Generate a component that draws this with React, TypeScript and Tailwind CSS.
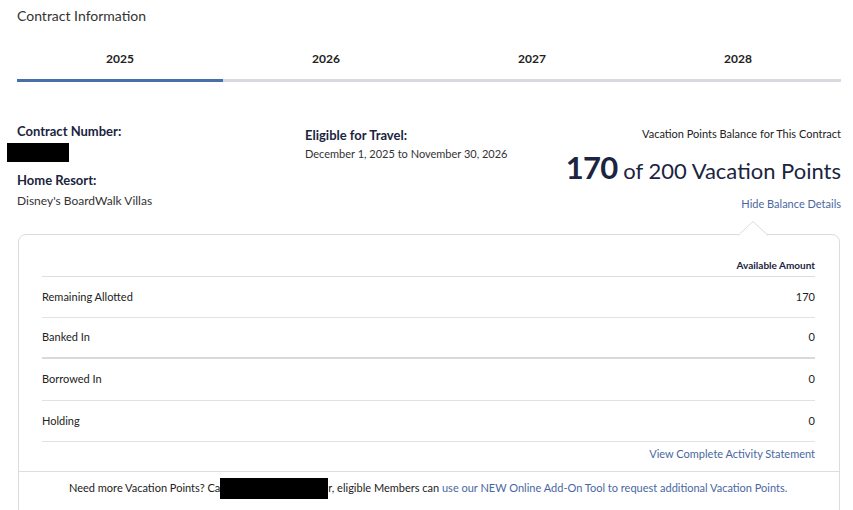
import { memo } from "react";

const years = ["2025", "2026", "2027", "2028"];

const rows = [
  { label: "Remaining Allotted", value: "170" },
  { label: "Banked In", value: "0" },
  { label: "Borrowed In", value: "0" },
  { label: "Holding", value: "0" },
];

function App() {
  return (
    <div className="min-h-screen bg-white text-[#253047] font-['Lato',_'Noto_Sans',_sans-serif] pl-[17px] pr-[12px] pt-[5px]">
      <div className="text-[14px] text-[#333]">Contract Information</div>

      {/* year tabs */}
      <div className="mt-[24px] flex">
        {years.map((y, i) => (
          <div key={y} className="flex-1 flex flex-col items-center">
            <div className="h-[29px] text-[12px] font-bold text-[#222]">{y}</div>
            <div className={i === 0 ? "w-full h-[3px] bg-[#4a6fa8]" : "w-full h-[3px] bg-[#d6dae0]"}></div>
          </div>
        ))}
      </div>

      {/* contract summary */}
      <div className="mt-[41px] flex">
        <div className="w-[288px]">
          <div className="text-[13px] font-bold text-[#1b2440] leading-[17px]">Contract Number:</div>
          <div className="-ml-[10px] mt-[3px] w-[62px] h-[19px] bg-black"></div>
          <div className="mt-[10px] text-[13px] font-bold text-[#1b2440] leading-[17px]">Home Resort:</div>
          <div className="mt-[3px] text-[12px] text-[#333]">Disney's BoardWalk Villas</div>
        </div>
        <div className="pt-[4px]">
          <div className="text-[13px] font-bold text-[#1b2440] leading-[17px]">Eligible for Travel:</div>
          <div className="mt-[2px] text-[11px] text-[#333]">December 1, 2025 to November 30, 2026</div>
        </div>
        <div className="flex-1 flex flex-col items-end">
          <div className="mt-[3px] text-[11px] text-[#222]">Vacation Points Balance for This Contract</div>
          <div className="mt-[1px] flex items-baseline text-[#1b2440]">
            <span className="text-[31px] font-bold tracking-tight">170</span>
            <span className="ml-[6px] text-[22px]">of 200 Vacation Points</span>
          </div>
          <div className="mt-[6px] text-[11px] text-[#4a67a1]">Hide Balance Details</div>
        </div>
      </div>

      {/* balance card */}
      <div className="relative mt-[21px] ml-[1px] mr-[1px] border border-[#dcdcdc] rounded-t-[8px] bg-white">
        <svg className="absolute -top-[14px] right-[71px]" width="30" height="15" viewBox="0 0 30 15">
          <path d="M0 14.5 L15 0.5 L30 14.5" fill="white" stroke="#dcdcdc" strokeWidth="1" />
          <rect x="1" y="14" width="28" height="2" fill="white" />
        </svg>
        <div className="pl-[23px] pr-[24px]">
          <div className="pt-[23px] pb-[3px] border-b border-[#dedede] text-right text-[10px] font-bold text-[#1b2440]">
            Available Amount
          </div>
          {rows.map((r, i) => (
            <div
              key={r.label}
              className={
                i === 1
                  ? "h-[41px] flex items-center justify-between border-b-2 border-[#d9d9d9] text-[11px] text-[#222]"
                  : "h-[41.5px] flex items-center justify-between border-b border-[#e2e2e2] text-[11px] text-[#222]"
              }
            >
              <span>{r.label}</span>
              <span>{r.value}</span>
            </div>
          ))}
          <div className="pt-[4px] pb-[8px] text-right text-[11px] text-[#4a67a1]">View Complete Activity Statement</div>
        </div>
        <div className="border-t border-[#dedede] pt-[6px] pb-[20px] pl-[50px] text-[11px] text-[#222] flex items-center">
          <span>Need more Vacation Points? Ca</span>
          <span className="inline-block w-[108px] h-[21px] bg-black"></span>
          <span>r, eligible Members can&nbsp;</span>
          <span className="text-[#4a67a1]">use our NEW Online Add-On Tool to request additional Vacation Points.</span>
        </div>
      </div>
    </div>
  );
}

export default memo(App);
